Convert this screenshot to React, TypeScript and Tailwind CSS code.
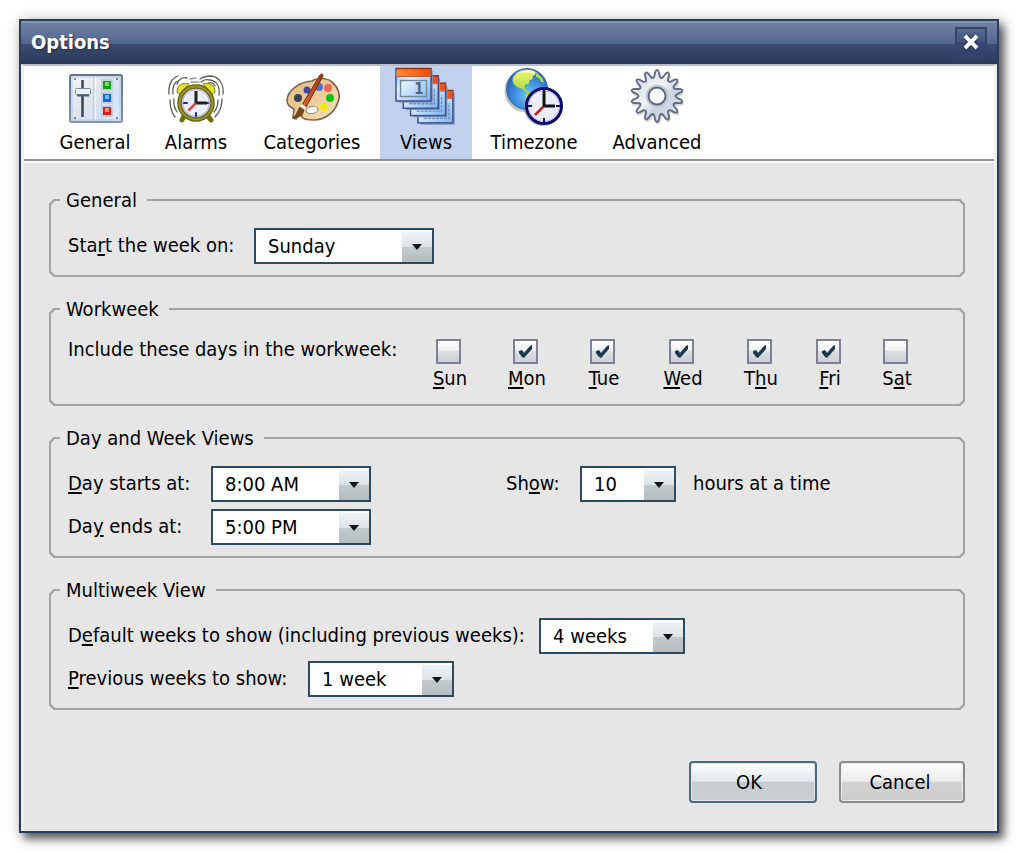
import { useState, type ReactNode } from "react"

const HOURS = ["7:00 AM", "8:00 AM", "9:00 AM", "4:00 PM", "5:00 PM", "6:00 PM"]
const WEEKDAYS = ["Sunday", "Monday", "Tuesday", "Wednesday", "Thursday", "Friday", "Saturday"]

function GeneralIcon() {
  return (
    <svg viewBox="0 0 64 64" className="size-16" aria-hidden="true">
      <defs>
        <linearGradient id="panel" x1="0" y1="0" x2="1" y2="1">
          <stop offset="0" stopColor="#f4f7fa" />
          <stop offset="0.5" stopColor="#dde4ed" />
          <stop offset="0.75" stopColor="#cfe2fa" />
          <stop offset="1" stopColor="#e8eef5" />
        </linearGradient>
        <linearGradient id="panelEdge" x1="0" y1="0" x2="0" y2="1">
          <stop offset="0" stopColor="#5f7392" />
          <stop offset="1" stopColor="#8391a9" />
        </linearGradient>
      </defs>
      <rect x="7" y="9" width="52" height="47" rx="2" fill="url(#panel)" stroke="url(#panelEdge)" strokeWidth="2" />
      <rect x="9" y="11" width="48" height="43" fill="none" stroke="#b9c6d8" strokeWidth="1" />
      <path d="M31 11v43" stroke="#a9b4c2" strokeWidth="1" />
      <path d="M32 11v43" stroke="#fff" strokeWidth="1" />
      <g fill="#5a6577">
        <circle cx="12" cy="13" r="1" />
        <circle cx="54" cy="13" r="1" />
        <circle cx="12" cy="52" r="1" />
        <circle cx="54" cy="52" r="1" />
      </g>
      <path d="M19.500 14v37" stroke="#3b444f" strokeWidth="2.500" />
      <rect x="12.500" y="22.500" width="15" height="6" rx="1" fill="#eef2f6" stroke="#7a8aa0" />
      <path d="M14 29.500h12" stroke="#4d6078" strokeWidth="2" />
      {[
        ["#18a012", "#6be35c", 19],
        ["#1769d2", "#6fb9ff", 32],
        ["#d22222", "#ff8d80", 45],
      ].map(([dark, light, y]) => (
        <g key={dark}>
          <rect x="38" y={Number(y) - 6} width="12" height="12" fill="#c6ced8" />
          <rect x="40" y={Number(y) - 4} width="8" height="8" fill={String(dark)} />
          <rect x="42" y={Number(y) - 3} width="4" height="4" fill={String(light)} />
        </g>
      ))}
    </svg>
  )
}

function AlarmIcon() {
  return (
    <svg viewBox="0 0 64 64" className="size-16" aria-hidden="true" fill="none" strokeLinecap="round">
      {/* ringing lines */}
      <g stroke="#5d5d55" strokeWidth="1.300">
        <path d="M5 28c-1-9 3-16 9-18M9 28c-1-7 1-12 7-14M13 18c2-5 6-7 10-6" />
        <path d="M59 28c1-9-3-17-12-18-4 0-8 1-11 3M55 29c1-8-2-14-9-15-4-1-7 0-9 2M51 20c-1-3-4-4-7-3" />
        <path d="M6 34c0 8 2 13 5 17M10 33c-1 6 1 10 3 13" />
        <path d="M58 33c0 8-2 13-7 18M54 34c0 6-2 10-4 12" />
        <path d="M26 13l6-1M27 16h8" stroke="#99998f" />
      </g>
      <path d="M20 50l-2 4M44 50l3 4" stroke="#6f6c14" strokeWidth="5" />
      <path d="M13 26c0-7 5-10 12-8l-9 10z" fill="#e3df2b" stroke="#85821e" />
      <path d="M51 26c0-7-5-10-12-8l9 10z" fill="#e3df2b" stroke="#85821e" />
      <circle cx="32" cy="37" r="16.500" fill="#eceefb" stroke="#66630f" strokeWidth="4.500" />
      <circle cx="32" cy="37" r="16.500" stroke="#99952a" strokeWidth="2" />
      <circle cx="32" cy="37" r="13.500" stroke="#a9abc8" />
      <path d="M20 37h3M41 37h3M32 47v3" stroke="#2323a5" strokeWidth="2" />
      <path d="M32 25v12h11" stroke="#20201c" strokeWidth="3" strokeLinecap="butt" />
      <path d="M31 38l-6 6" stroke="#dc4a4a" strokeWidth="2.500" />
    </svg>
  )
}

function PaletteIcon() {
  return (
    <svg viewBox="0 0 64 64" className="size-16" aria-hidden="true">
      <defs>
        <linearGradient id="wood" x1="0" y1="0" x2="1" y2="1">
          <stop offset="0" stopColor="#e0bb85" />
          <stop offset="0.5" stopColor="#eecb97" />
          <stop offset="1" stopColor="#f8e4c0" />
        </linearGradient>
        <linearGradient id="handle" x1="0" y1="0" x2="1" y2="0.400">
          <stop offset="0" stopColor="#e98a4e" />
          <stop offset="0.600" stopColor="#c9501a" />
          <stop offset="1" stopColor="#7e2b0c" />
        </linearGradient>
      </defs>
      <path
        d="M7 34C8 24 19 16 32 15c4-3 14-4 20 1 6 5 9 13 6 20-3 10-13 18-24 18-5 0-11 0-12-3 0-3-1-5-3-4l-3 6-3-1 1-9c-4-2-7-5-7-8z"
        fill="url(#wood)"
        stroke="#806a4f"
        strokeWidth="1.700"
      />
      <circle cx="18" cy="32" r="4" fill="#3d4252" />
      <circle cx="27" cy="24" r="3.500" fill="#42479b" />
      <circle cx="39" cy="21" r="4" fill="#5871cf" />
      <circle cx="48" cy="22" r="4" fill="#ef6652" />
      <circle cx="50" cy="32" r="4" fill="#13c20f" />
      <circle cx="44" cy="41" r="4" fill="#f2ea08" />
      <ellipse cx="32" cy="44" rx="6" ry="3.500" fill="#fff" stroke="#9c8056" transform="rotate(-8 32 44)" />
      <path d="M40 9c2-2 3-1 3 1L26 41l-4-2z" fill="url(#handle)" stroke="#6d2a10" strokeWidth="1" />
      <path d="M22 38l4 3-2 3-4-3z" fill="#fff" />
      <path d="M20 41l4 3c-1 5-4 8-11 8 4-3 4-7 7-11z" fill="#7b4519" stroke="#54300f" strokeWidth="0.700" />
    </svg>
  )
}

function ViewsIcon() {
  return (
    <svg viewBox="0 0 64 64" className="size-16" aria-hidden="true">
      <defs>
        <linearGradient id="sheet" x1="0" y1="0" x2="1" y2="1">
          <stop offset="0" stopColor="#82b8f6" />
          <stop offset="0.350" stopColor="#e2f2ff" />
          <stop offset="1" stopColor="#78b2f6" />
        </linearGradient>
        <linearGradient id="sheetTop" x1="0" y1="0" x2="1" y2="0">
          <stop offset="0" stopColor="#ff8a2b" />
          <stop offset="1" stopColor="#f04d0c" />
        </linearGradient>
      </defs>
      {[3, 2, 1, 0].map((i) => (
        <g key={i} transform={`translate(${i * 7.3} ${i * 7.3})`}>
          <path d="M38 5v31H5" fill="none" stroke="#8794b8" strokeWidth="1.500" />
          <rect x="2" y="3" width="35" height="32" fill="url(#sheet)" stroke="#3d5192" strokeWidth="1.500" />
          <rect x="2.500" y="3" width="34" height="7" fill="url(#sheetTop)" />
          <path d="M1.500 2.500h36" stroke="#993014" strokeWidth="1.400" />
          <path d="M2.500 10.500h34" stroke="#b75f4b" />
          {i === 0 ? (
            <rect x="6.500" y="14.500" width="26" height="16" fill="none" stroke="#73879f" strokeWidth="1.400" />
          ) : (
            <path d="M8 30.500h25V15M10 27.500h20M30.500 15v13" fill="none" stroke="#6f8db5" strokeWidth="1.400" strokeDasharray="3 1" />
          )}
        </g>
      ))}
      <text x="25" y="28" textAnchor="middle" fontSize="15" fontWeight="bold" fill="#536578" fontFamily="DejaVu Sans Condensed, sans-serif">
        1
      </text>
    </svg>
  )
}

function TimezoneIcon() {
  return (
    <svg viewBox="0 0 64 64" className="size-16" aria-hidden="true">
      <defs>
        <radialGradient id="sea" cx="0.550" cy="0.650" r="0.600">
          <stop offset="0" stopColor="#73c7fa" />
          <stop offset="0.600" stopColor="#3b8fe0" />
          <stop offset="1" stopColor="#2865ae" />
        </radialGradient>
        <linearGradient id="land" x1="0" y1="0" x2="0" y2="1">
          <stop offset="0" stopColor="#eef56e" />
          <stop offset="1" stopColor="#9fd83c" />
        </linearGradient>
      </defs>
      <circle cx="24" cy="25" r="21.500" fill="#9aa0a8" opacity="0.600" />
      <circle cx="25" cy="23" r="20.500" fill="url(#sea)" stroke="#476c96" />
      <path
        d="M11 11c6-7 15-8 21-6 3 3 0 5-2 5 2 2 0 4-2 4-2 1 1 3-2 4-3 0-4 2-3 4 1 3 4 3 6 6-2 0-6-2-8-5-4-1-8-2-10-7-1-2 0-4 0-5z"
        fill="url(#land)"
      />
      <path d="M34 7c4 2 7 5 8 9-3 1-4-1-4-3-3-1-5-3-4-6zM24 28c5-2 9 0 11 3-2 5-6 7-8 11-4-4-5-9-3-14z" fill="#a8dc4a" />
      <path d="M12 8c7-6 18-6 25 0-8-2-17-2-25 0z" fill="#fff" opacity="0.550" />
      <circle cx="41" cy="41" r="19" fill="#80848c" opacity="0.600" />
      <circle cx="42" cy="40" r="17.500" fill="#eceefc" stroke="#0b0b6c" strokeWidth="3" />
      <circle cx="42" cy="40" r="15.500" fill="none" stroke="#b6b9dd" />
      <path d="M26 40h4M54 40h4M42 52v4M42 24v2" stroke="#12128a" strokeWidth="2" />
      <path d="M42 25v15h11" fill="none" stroke="#15150f" strokeWidth="3" />
      <path d="M41 41l-8 8" stroke="#b51f26" strokeWidth="2.500" />
    </svg>
  )
}

// fourteen rounded teeth, each followed by a soft valley
function gearPath(cx: number, cy: number, outer: number, inner: number, teeth: number) {
  const step = (Math.PI * 2) / teeth
  const at = (r: number, a: number) => `${(cx + r * Math.cos(a)).toFixed(2)} ${(cy + r * Math.sin(a)).toFixed(2)}`
  let d = ""
  for (let i = 0; i < teeth; i++) {
    const a = i * step - Math.PI / 2
    d += `${i === 0 ? "M" : "L"}${at(outer - 2, a - step * 0.17)}`
    d += `Q${at(outer + 2, a)} ${at(outer - 2, a + step * 0.17)}`
    d += `L${at(inner + 1, a + step * 0.3)}`
    d += `Q${at(inner - 2, a + step * 0.5)} ${at(inner + 1, a + step * 0.7)}`
  }
  return d + "Z"
}

function GearIcon() {
  return (
    <svg viewBox="0 0 64 64" className="size-16" aria-hidden="true" strokeLinejoin="round">
      <defs>
        <linearGradient id="steel" x1="0" y1="0" x2="1" y2="1">
          <stop offset="0" stopColor="#cfd6de" />
          <stop offset="0.450" stopColor="#f1f4f7" />
          <stop offset="0.600" stopColor="#cbd4dd" />
          <stop offset="1" stopColor="#dce8f4" />
        </linearGradient>
      </defs>
      <path d={gearPath(33, 32, 26, 19, 14)} fill="#c4c7cc" stroke="#d5d7da" strokeWidth="1.500" />
      <path d={gearPath(32, 30, 26, 19, 14)} fill="url(#steel)" stroke="#5f6a86" strokeWidth="1.900" />
      <circle cx="32" cy="30" r="10.500" fill="none" stroke="#bac4d0" strokeWidth="1.500" />
      <circle cx="32" cy="30" r="8.500" fill="#fff" stroke="#596481" strokeWidth="1.900" />
    </svg>
  )
}

const TABS = [
  { name: "General", icon: <GeneralIcon />, width: "w-[106px]" },
  { name: "Alarms", icon: <AlarmIcon />, width: "w-24" },
  { name: "Categories", icon: <PaletteIcon />, width: "w-[136px]" },
  { name: "Views", icon: <ViewsIcon />, width: "w-[92px]" },
  { name: "Timezone", icon: <TimezoneIcon />, width: "w-[124px]" },
  { name: "Advanced", icon: <GearIcon />, width: "w-[122px]" },
]

// Text with its access key underlined
function Mnemonic({ text, at }: { text: string; at: number }) {
  return (
    <>
      {text.slice(0, at)}
      <span className="underline decoration-2 underline-offset-2">{text[at]}</span>
      {text.slice(at + 1)}
    </>
  )
}

function Group({ title, className, children }: { title: string; className?: string; children: ReactNode }) {
  return (
    <fieldset className={`rounded-[5px] border-2 border-[#a3a3a3] px-[17px] pb-[11px] [corner-shape:bevel] ${className ?? ""}`}>
      <legend className="-ml-2 pr-2.5 pl-1.5 leading-6">{title}</legend>
      {children}
    </fieldset>
  )
}

interface DropdownProps {
  id: string
  value: string
  options: string[]
  width: string
}

function Dropdown({ id, value, options, width }: DropdownProps) {
  const [selected, setSelected] = useState(value)

  return (
    <div className={`relative h-9 shrink-0 border-2 border-[#2e4a5e] bg-white ${width}`}>
      <select
        id={id}
        value={selected}
        onChange={(e) => setSelected(e.target.value)}
        className="size-full appearance-none bg-transparent pr-8 pl-3 leading-8 outline-none"
      >
        {options.map((o) => (
          <option key={o}>{o}</option>
        ))}
      </select>
      <span className="pointer-events-none absolute inset-y-0 right-0 flex w-[30px] items-center justify-center border-t-2 border-white bg-[linear-gradient(#edf3f6,#dce2e5_50%,#c3cacd_50%,#b7bec1)]">
        <svg viewBox="0 0 10 6" className="h-1.5 w-2.5" aria-hidden="true">
          <path d="M0 0h10L5 6z" fill="#10141a" />
        </svg>
      </span>
    </div>
  )
}

function DayBox({ name, at, on }: { name: string; at: number; on: boolean }) {
  const [checked, setChecked] = useState(on)

  return (
    <label className="flex flex-col items-center">
      <span className="grid pr-1">
        <input
          type="checkbox"
          checked={checked}
          onChange={(e) => setChecked(e.target.checked)}
          className="col-start-1 row-start-1 size-[25px] appearance-none border-2 border-[#7d8197] bg-[linear-gradient(#ffffff,#eeeff0_45%,#dcdfe1_50%,#cdd1d4)]"
        />
        {checked && (
          <svg viewBox="0 0 25 25" className="pointer-events-none col-start-1 row-start-1 size-[25px]" aria-hidden="true">
            <path d="M6 12l3-1 2 3 6-7 2-1v4l-8 9-2-1-3-4z" fill="#1d384e" />
          </svg>
        )}
      </span>
      <span className="leading-7">
        <Mnemonic text={name} at={at} />
      </span>
    </label>
  )
}

export default function App() {
  const [tab, setTab] = useState("Views")

  return (
    <div className="bg-white pt-[19px] pr-[21px] pb-[21px] pl-[19px] font-['DejaVu_Sans_Condensed','DejaVu_Sans',sans-serif] text-xl leading-6 text-black">
      <main className="border-2 border-[#2b3a62] bg-[#e6e6e6] shadow-[5px_6px_8px_rgba(0,0,0,0.55),2px_2px_14px_rgba(0,0,0,0.3)]">
        <header className="flex h-[43px] items-center justify-between border-t-2 border-[#7f94b5] bg-[linear-gradient(#6d82a5,#52678c_50%,#3b4c70_50%,#2a385c)] px-2.5 pb-1">
          <h1 className="font-bold text-white [text-shadow:1px_1px_2px_#1c2744]">Options</h1>
          <button
            type="button"
            aria-label="Close"
            className="flex h-[30px] w-8 items-center justify-center border-2 border-[#334569] bg-[linear-gradient(#556b90,#41547a_50%,#374970_50%,#30406a)]"
          >
            <svg viewBox="0 0 16 16" className="size-4" aria-hidden="true">
              <path d="M3 3l10 10M13 3L3 13" stroke="#1c2744" strokeWidth="6" />
              <path d="M2 2l12 12M14 2L2 14" stroke="#fff" strokeWidth="4" />
            </svg>
          </button>
        </header>

        <div className="border-x-[3px] border-t-2 border-[#efefef] border-t-[#b9bdc6]">
          <nav className="flex border-b-2 border-[#8f8f8f] bg-white pl-[18px]">
            {TABS.map((t) => (
              <button
                key={t.name}
                type="button"
                onClick={() => setTab(t.name)}
                className={`flex flex-col items-center pb-[5px] ${t.width} ${tab === t.name ? "bg-[#c2d2ee]" : ""}`}
              >
                {t.icon}
                <span>{t.name}</span>
              </button>
            ))}
          </nav>

          <form className="border-t-2 border-[#f6f6f6] pt-[25px] pr-[29px] pb-7 pl-[25px]" onSubmit={(e) => e.preventDefault()}>
            <Group title="General">
              <div className="flex pt-4">
                <label htmlFor="week-start" className="w-[186px] pt-[5px]">
                  <Mnemonic text="Start the week on:" at={3} />
                </label>
                <Dropdown id="week-start" value="Sunday" options={WEEKDAYS} width="w-[180px]" />
              </div>
            </Group>

            <Group title="Workweek" className="mt-5">
              <div className="flex pt-4">
                <span className="w-[365px]">Include these days in the workweek:</span>
                <div className="grid grid-cols-[34px_40px_34px_44px_32px_26px_28px] gap-x-10 pt-0.5 pb-px">
                  <DayBox name="Sun" at={0} on={false} />
                  <DayBox name="Mon" at={0} on />
                  <DayBox name="Tue" at={0} on />
                  <DayBox name="Wed" at={0} on />
                  <DayBox name="Thu" at={1} on />
                  <DayBox name="Fri" at={0} on />
                  <DayBox name="Sat" at={1} on={false} />
                </div>
              </div>
            </Group>

            <Group title="Day and Week Views" className="mt-5">
              <div className="flex items-start pt-4">
                <div className="grid w-[438px] grid-cols-[143px_1fr] gap-y-[7px]">
                  <label htmlFor="day-start" className="pt-[5px]">
                    <Mnemonic text="Day starts at:" at={0} />
                  </label>
                  <Dropdown id="day-start" value="8:00 AM" options={HOURS} width="w-40" />
                  <label htmlFor="day-end" className="pt-[5px]">
                    <Mnemonic text="Day ends at:" at={2} />
                  </label>
                  <Dropdown id="day-end" value="5:00 PM" options={HOURS} width="w-40" />
                </div>
                <label htmlFor="hours" className="w-[74px] pt-[5px]">
                  <Mnemonic text="Show:" at={2} />
                </label>
                <Dropdown id="hours" value="10" options={["8", "10", "12", "24"]} width="w-24" />
                <span className="pt-[5px] pl-[17px]">hours at a time</span>
              </div>
            </Group>

            <Group title="Multiweek View" className="mt-5">
              <div className="flex pt-4">
                <label htmlFor="default-weeks" className="w-[471px] pt-[5px]">
                  <Mnemonic text="Default weeks to show (including previous weeks):" at={1} />
                </label>
                <Dropdown id="default-weeks" value="4 weeks" options={["2 weeks", "3 weeks", "4 weeks", "5 weeks"]} width="w-[146px]" />
              </div>
              <div className="flex pt-[7px]">
                <label htmlFor="previous-weeks" className="w-60 pt-[5px]">
                  <Mnemonic text="Previous weeks to show:" at={0} />
                </label>
                <Dropdown id="previous-weeks" value="1 week" options={["0 weeks", "1 week", "2 weeks"]} width="w-[146px]" />
              </div>
            </Group>

            <div className="mt-[51px] flex justify-end gap-[22px]">
              <button
                type="submit"
                className="h-[42px] w-32 rounded-[4px] border-2 border-[#4d6a7c] bg-[linear-gradient(#fdfeff,#e3e9ee_48%,#c6cbcf_50%,#cdd1d4)] pr-2 shadow-[inset_0_0_0_1px_#dfe7ec]"
              >
                OK
              </button>
              <button
                type="button"
                className="h-[42px] w-[126px] rounded-[4px] border-2 border-[#8c8c8c] bg-[linear-gradient(#ffffff,#ebebeb_48%,#d2d2d2_50%,#cccccc)] pr-1 shadow-[inset_0_0_0_1px_#ececec]"
              >
                Cancel
              </button>
            </div>
          </form>
        </div>
      </main>
    </div>
  )
}
